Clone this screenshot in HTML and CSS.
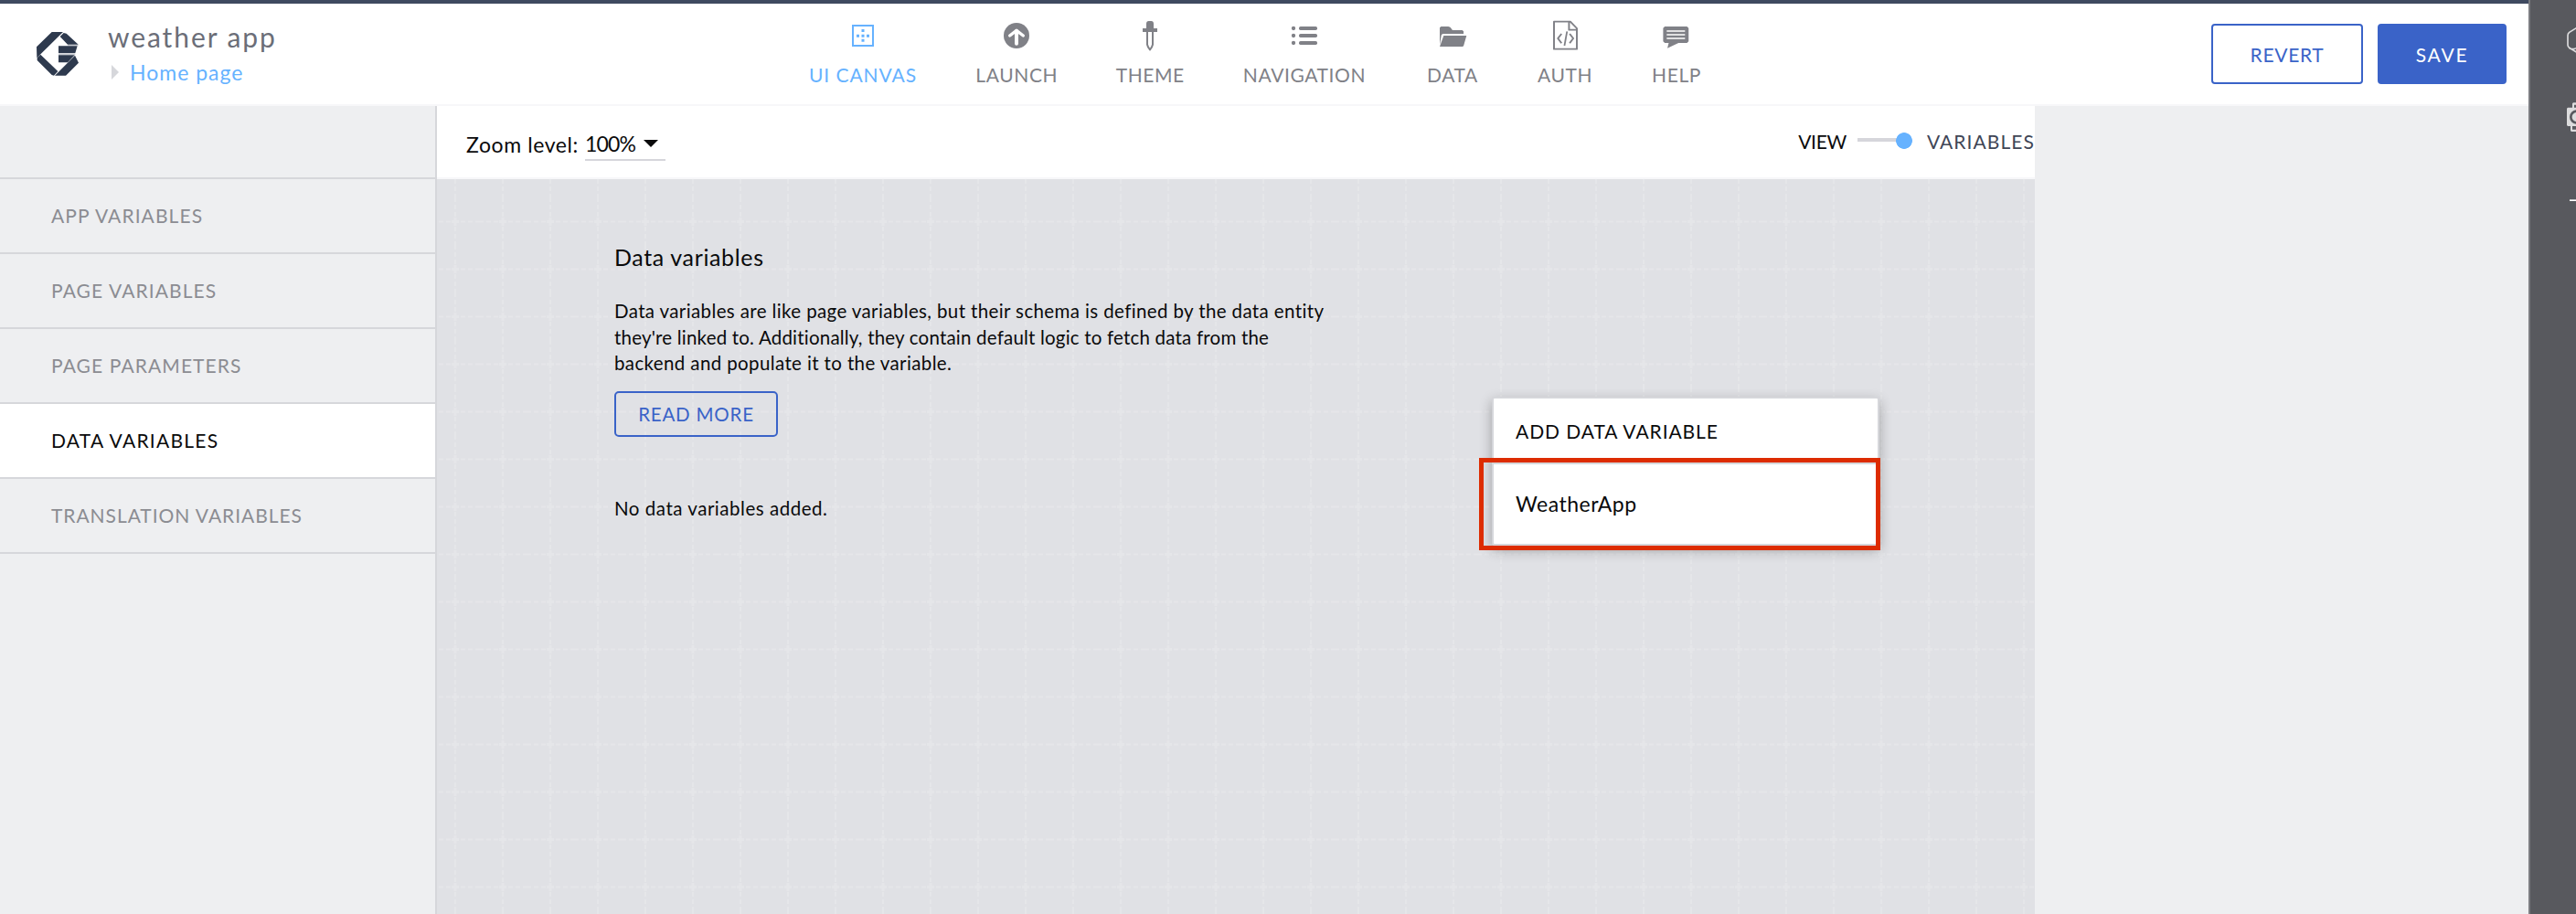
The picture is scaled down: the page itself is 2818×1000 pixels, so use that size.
FILE: index.html
```
<!DOCTYPE html>
<html lang="en">
<head>
<meta charset="utf-8">
<title>weather app</title>
<link rel="stylesheet" href="styles.css">
</head>
<body>
<div class="shell">
  <div class="app">
    <header class="header">
      <svg class="logo" viewBox="0 0 138 144">
        <path fill="#2e3a4e" d="M50 0H87L1 85 0 49ZM89 3 98 5 137 41H102L77 15ZM72 46H134L127 69H72ZM72 76H125L102 100H72ZM126 77 138 101 96 143H60ZM13 74 70 129 57 143 50 141 2 93V85Z"/>
        <path fill="#c9ccd2" d="M102 42H137V45H102ZM72 70H127V75H72Z"/>
      </svg>
      <div class="brand">
        <div class="brand-name">weather app</div>
        <div class="crumb"><i class="crumb-arrow"></i>Home page</div>
      </div>
      <nav class="nav">
        <a class="nav-item active">
          <svg viewBox="0 0 120 120"><rect x="27" y="24" width="66" height="66" fill="none" stroke="currentColor" stroke-width="6"/><path fill="currentColor" d="M55.500 36h9v9h-9zM55.500 53h9v9h-9zM55.500 68h9v9h-9zM39 53h9v9h-9zM72 53h9v9h-9z"/></svg>
          <span>UI CANVAS</span>
        </a>
        <a class="nav-item">
          <svg viewBox="0 0 120 120"><circle cx="60" cy="57" r="42" fill="currentColor"/><path d="M60 83V42" fill="none" stroke="#fff" stroke-width="12" stroke-linecap="round"/><path d="M38 57 60 40 82 57" fill="none" stroke="#fff" stroke-width="10" stroke-linecap="round" stroke-linejoin="round"/></svg>
          <span>LAUNCH</span>
        </a>
        <a class="nav-item">
          <svg viewBox="0 0 120 120"><path fill="currentColor" d="M48 33V18Q48 9 56 9H64Q72 9 72 18V33H84V45H36V33Z"/><path fill="none" stroke="currentColor" stroke-width="6" d="M51 44V86Q53 95 60 103 67 95 69 86V44"/></svg>
          <span>THEME</span>
        </a>
        <a class="nav-item">
          <svg viewBox="0 0 120 120"><g fill="currentColor"><circle cx="24" cy="33" r="6.500"/><circle cx="24" cy="57" r="6.500"/><circle cx="24" cy="81" r="6.500"/><rect x="42" y="27" width="60" height="12" rx="5"/><rect x="42" y="51" width="60" height="12" rx="5"/><rect x="42" y="75" width="60" height="12" rx="5"/></g></svg>
          <span>NAVIGATION</span>
        </a>
        <a class="nav-item">
          <svg viewBox="0 0 120 120"><path fill="currentColor" transform="translate(-6.600 0) scale(1.071 1)" d="M23 31 27 27H49L55 29 62 39H92L96 43V51H32L28 55 23 88ZM35 57H105L96 91 93 93H23Z"/></svg>
          <span>DATA</span>
        </a>
        <a class="nav-item">
          <svg viewBox="0 0 120 120"><g transform="translate(-2.800 0) scale(1.071 1)"><path fill="none" stroke="currentColor" stroke-width="5.500" stroke-linejoin="round" d="M25 11H75L95 33V101H25ZM71 12V38H94M48 51 37 66 48 82M73 51 84 66 73 82"/><path stroke="currentColor" stroke-width="5" d="M65 43 57 90"/></g></svg>
          <span>AUTH</span>
        </a>
        <a class="nav-item">
          <svg viewBox="0 0 120 120"><g transform="translate(-6.300 0) scale(1.071 1)"><path fill="currentColor" d="M26 27H94L99 32V76L94 81H68L34 98 38 81H26L21 76V32Z"/><path stroke="#fff" stroke-width="5" d="M32 42H88M32 54H88M32 66H88"/></g></svg>
          <span>HELP</span>
        </a>
      </nav>
      <div class="actions">
        <button class="btn revert">REVERT</button>
        <button class="btn save">SAVE</button>
      </div>
    </header>
    <div class="body">
      <aside class="sidebar">
        <div class="side-head"></div>
        <a class="side-item">APP VARIABLES</a>
        <a class="side-item">PAGE VARIABLES</a>
        <a class="side-item">PAGE PARAMETERS</a>
        <a class="side-item selected">DATA VARIABLES</a>
        <a class="side-item">TRANSLATION VARIABLES</a>
      </aside>
      <main class="main">
        <div class="toolbar">
          <div class="zoom"><span class="zoom-label">Zoom level:</span><div class="zoom-select"><span>100%</span><i class="caret"></i></div></div>
          <div class="mode"><span class="mode-view">VIEW</span><i class="switch"></i><span class="mode-vars">VARIABLES</span></div>
        </div>
        <div class="canvas">
          <section class="info">
            <h1>Data variables</h1>
            <p>Data variables are like page variables, but their schema is defined by the data entity<br><span class="tight">they're linked to. Additionally, they contain default logic to fetch data from the</span><br>backend and populate it to the variable.</p>
            <button class="read">READ MORE</button>
            <div class="empty">No data variables added.</div>
          </section>
          <section class="popup">
            <div class="popup-head">ADD DATA VARIABLE</div>
            <div class="popup-item">WeatherApp</div>
            <div class="highlight"></div>
          </section>
        </div>
      </main>
    </div>
  </div>
  <aside class="rail">
    <svg viewBox="0 0 150 720">
      <path fill="none" stroke="#dcdcdd" stroke-width="5" d="M156 89 128 106Q123 110 123 116V148Q123 154 128 157L156 174M128 158Q140 164 150 158"/>
      <path fill="#dcdcdd" d="M120 356 123 353H138V340L141 337H150V353H150V413H150V432H135L132 429V414H123L120 411Z"/>
      <path fill="#58595e" d="M144 344H150V353H144ZM138 414H150V425H138Z"/>
      <circle cx="152" cy="384" r="19" fill="none" stroke="#58595e" stroke-width="8"/>
      <path stroke="#fff" stroke-width="5" d="M129 657.500H150"/>
    </svg>
  </aside>
</div>
</body>
</html>
```
FILE: styles.css
```
* { box-sizing: border-box; }
body { margin: 0; font-family: Lato, "Liberation Sans", sans-serif; color: #0a0a0b; background: #eeeff1; }
h1, p { margin: 0; font-weight: 400; }
button { font-family: inherit; padding: 0; }

.shell { display: flex; width: 2818px; height: 1000px; overflow: hidden; white-space: nowrap; }
.app { width: 2766px; display: flex; flex-direction: column; border-top: 4px solid #3f4a60; }
.header { height: 112px; display: flex; background: #fff; border-bottom: 2px solid #f7f7f9; }
.logo { width: 46px; height: 48px; margin: 31px 0 0 40px; }
.brand { width: 767px; padding: 16px 0 0 32px; }
.brand-name { font-size: 30px; line-height: 40px; letter-spacing: 1.9px; color: #6b6e78; }
.crumb { display: flex; align-items: center; font-size: 23px; line-height: 36px; letter-spacing: 1px; margin-top: 1px; color: #66b2ff; }
.crumb-arrow { width: 0; height: 0; margin: 0 12px 0 4px; border-left: 8px solid #d6d7db; border-top: 8px solid transparent; border-bottom: 8px solid transparent; }

.nav { display: grid; grid-template-columns: 182px 154.5px 137.5px 200px 124px 122px 122px; }
.nav-item { display: flex; flex-direction: column; align-items: center; padding-top: 16px; font-size: 21px; line-height: 24px; letter-spacing: .6px; color: #808187; }
.nav-item svg { width: 40px; height: 40px; margin-bottom: 10px; }
.nav-item.active { color: #66b2ff; letter-spacing: .95px; }

.actions { display: flex; gap: 16px; margin: 22px 24px 0 auto; }
.btn { height: 66px; border: 2px solid #3a63c8; border-radius: 4px; font-size: 21px; letter-spacing: .7px; }
.revert { width: 166px; color: #3a63c8; background: #fff; }
.save { width: 141px; color: #fff; background: #3a63c8; letter-spacing: 1.8px; }

.body { flex: 1; display: flex; }
.sidebar { width: 478px; border-right: 2px solid #d6d7db; }
.side-head { height: 80px; border-bottom: 2px solid #d6d7db; }
.side-item { display: flex; align-items: center; height: 82px; padding: 0 0 2px 56px; border-bottom: 2px solid #d6d7db; font-size: 21px; letter-spacing: 1.1px; color: #8b8c92; }
.side-item:last-child { letter-spacing: .95px; }
.side-item.selected { background: #fff; color: #0a0a0b; letter-spacing: 1.25px; }

.main { width: 1748px; display: flex; flex-direction: column; }
.toolbar { height: 80px; display: flex; justify-content: space-between; background: #fff; border-bottom: 2px solid #f7f7f9; }
.zoom { display: flex; margin: 24px 0 0 32px; font-size: 23px; line-height: 36px; }
.zoom-label { letter-spacing: .6px; }
.zoom-select { display: flex; align-items: center; width: 88px; height: 36px; margin-left: 7px; border-bottom: 2px solid #d6d6db; letter-spacing: -.8px; }
.caret { margin-left: 9px; border-top: 8px solid #0a0a0b; border-left: 8px solid transparent; border-right: 8px solid transparent; }
.mode { display: flex; align-items: center; height: 76px; font-size: 21px; }
.mode-view { letter-spacing: -.3px; }
.switch { width: 60px; height: 18px; margin: 0 16px 0 12px; background: radial-gradient(circle at 51px 9px, #66b2ff 8.500px, transparent 9.200px), linear-gradient(#d6d6db, #d6d6db) 0 6px / 46px 4px no-repeat; }
.mode-vars { color: #3f4656; letter-spacing: 1.07px; }

.canvas { flex: 1; display: flex; align-items: flex-start; background: #e0e1e5 url("data:image/svg+xml,%3Csvg xmlns='http://www.w3.org/2000/svg' width='52' height='52'%3E%3Cg stroke='%23e5e6e9' stroke-width='2' fill='none'%3E%3Cpath stroke-dasharray='5 3' d='M0 26.500H52'/%3E%3Cpath stroke-dasharray='5 3' d='M26 0V52'/%3E%3Cpath stroke-width='3' d='M26 22V31M22 26.500H30'/%3E%3C/g%3E%3C/svg%3E") -6px 20px; }
.info { width: 960px; padding: 65px 0 0 194px; }
.info h1 { font-size: 25px; line-height: 40px; letter-spacing: .64px; }
.info p { margin-top: 25px; font-size: 20.5px; line-height: 28.667px; letter-spacing: .38px; }
.info .tight { letter-spacing: .2px; }
.read { display: block; width: 179px; height: 50px; margin-top: 16px; border: 2px solid #3a63c8; border-radius: 5px; background: transparent; color: #3a63c8; font-size: 20.5px; letter-spacing: .8px; }
.empty { margin-top: 63px; font-size: 20.5px; line-height: 30px; letter-spacing: .53px; }

.popup { position: relative; width: 424px; margin: 238px 0 0 194px; background: #fff; border: 2px solid #d6d7db; border-radius: 3px; box-shadow: 0 5px 14px rgba(0, 0, 0, .3); }
.popup-head { height: 72px; padding-left: 24px; border-bottom: 2px solid #d6d7db; font-size: 21px; line-height: 71px; letter-spacing: .94px; }
.popup-item { height: 87px; padding-left: 24px; font-size: 23px; line-height: 87px; letter-spacing: .5px; }
.highlight { position: absolute; left: -16px; top: 65px; width: 439px; height: 101px; border: 5px solid #dd2c00; }

.rail { width: 52px; background: #58595e; border-left: 2px solid #7b7c81; }
.rail svg { display: block; width: 50px; height: 240px; }
```
